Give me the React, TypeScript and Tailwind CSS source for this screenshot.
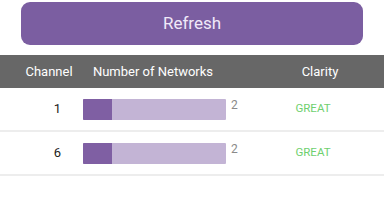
import React from "react";

const rows = [
  { ch: "1", n: "2", pct: 20 },
  { ch: "6", n: "2", pct: 20 },
];

export default function App() {
  return (
    <div className="w-[384px] h-[216px] bg-white overflow-hidden" style={{ fontFamily: "Roboto, 'Noto Sans', sans-serif" }}>
      <div className="pl-[21px] pt-[2px]">
        <div className="w-[342px] h-[43px] rounded-[9px] bg-[#7b5ea1] flex items-center justify-center text-[17px] text-[#f1e9f9]">
          Refresh
        </div>
      </div>
      <div className="mt-[10px] h-[33px] bg-[#676767] flex items-center text-white text-[13px] pl-[20px]">
        <div className="w-[58px] text-center">Channel</div>
        <div className="w-[150px] text-center">Number of Networks</div>
        <div className="ml-[52px] w-[80px] text-center">Clarity</div>
      </div>
      {rows.map((r, i) => (
        <div key={i} className="h-[44px] border-b-2 border-[#ededed] flex items-center">
          <div className="ml-[50px] w-[15px] text-center text-[13px] text-[#222]">{r.ch}</div>
          <div className="ml-[18px] w-[143px] h-[21px] bg-[#c3b4d5] rounded-[1px] flex overflow-hidden">
            <div className="h-full bg-[#7f5fa3]" style={{ width: `${r.pct}%` }} />
          </div>
          <div className="w-[20px] pl-[5px] text-[12px] text-[#8a8a8a] -mt-[8px]">{r.n}</div>
          <div className="ml-[27px] w-[80px] text-center text-[11.5px] text-[#6fd06f]">GREAT</div>
        </div>
      ))}
    </div>
  );
}
